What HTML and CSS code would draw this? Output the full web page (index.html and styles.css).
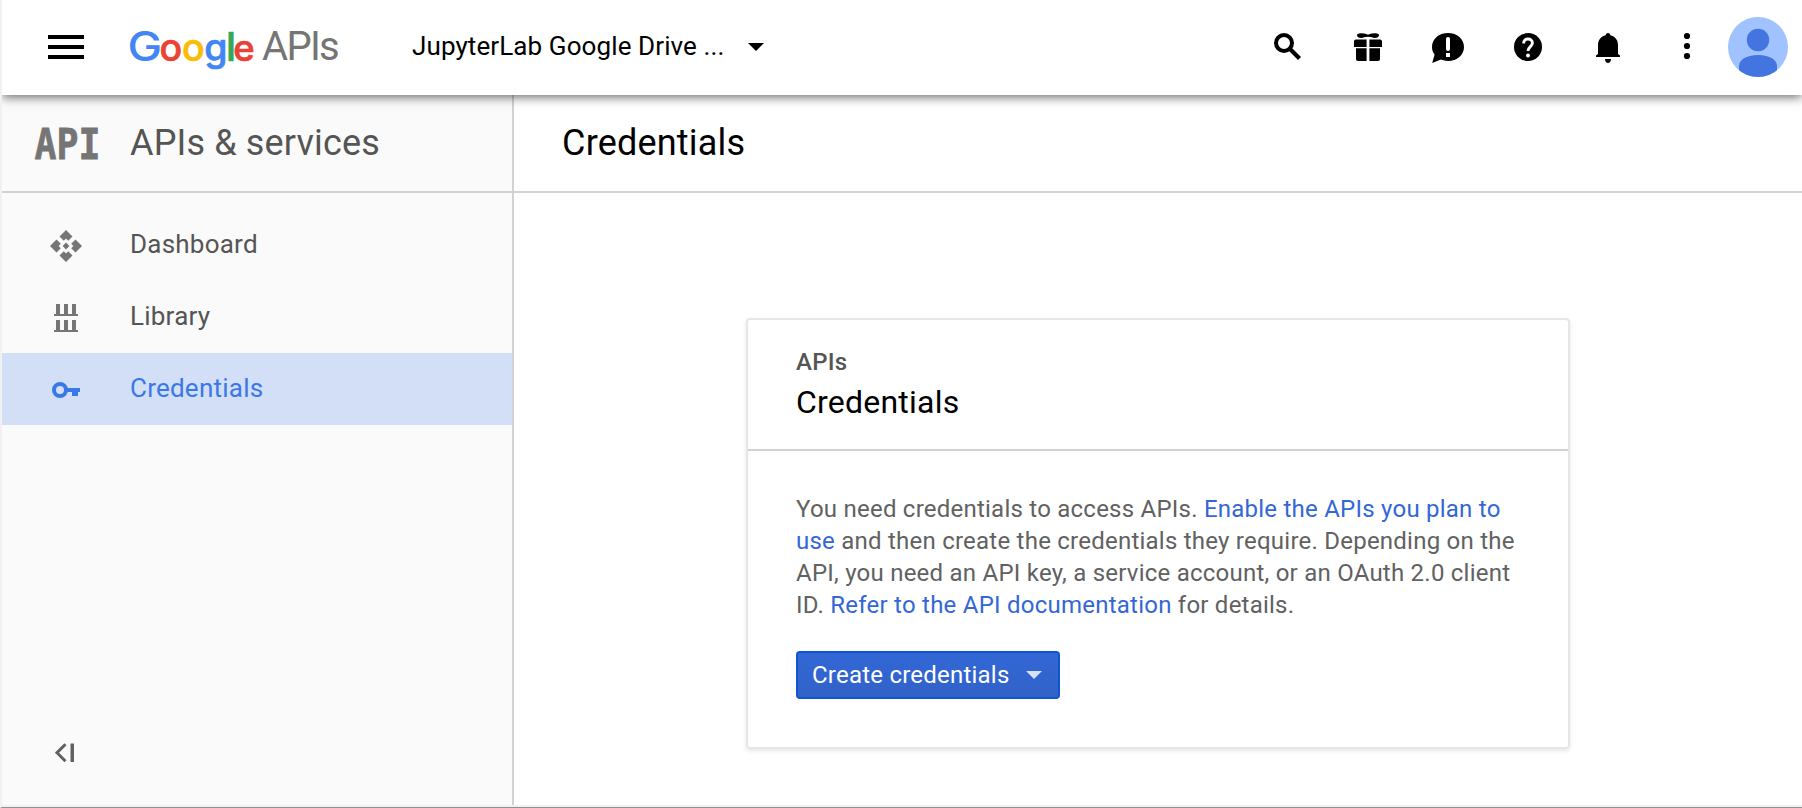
FILE: index.html
```html
<!DOCTYPE html>
<html lang="en">
<head>
<meta charset="utf-8">
<title>Credentials - Google APIs</title>
<link rel="stylesheet" href="styles.css">
</head>
<body>
<div class="app">
  <header class="topbar">
    <div class="menu"><span></span><span></span><span></span></div>
    <svg class="brand" width="224" height="72" viewBox="-4 -6 224 72">
      <g class="brand-google">
        <text class="blue" font-size="41" transform="translate(-2.500 43.500) scale(1.13 1)">G</text>
        <text class="red stroke-red" font-size="37.500" x="29.500" y="43.500">o</text>
        <text class="yellow stroke-yellow" font-size="37.500" x="52" y="43.500">o</text>
        <text class="blue stroke-blue" font-size="37.500" x="74.300" y="43.500">g</text>
        <text class="green stroke-green" font-size="39.500" x="96" y="43.500">l</text>
        <text class="red stroke-red" font-size="36.500" x="103.300" y="43.500">e</text>
      </g>
      <text class="brand-apis" x="132 156.500 180 189" y="43">APIs</text>
    </svg>
    <div class="project"><span>JupyterLab Google Drive ...</span>
      <svg width="16" height="8" viewBox="0 0 16 8"><path d="M0 0h16L8 8z"/></svg>
    </div>
    <nav class="tools">
      <svg viewBox="0 0 40 40"><circle cx="16" cy="16" r="8" fill="none" stroke="#000" stroke-width="4"/><path d="M21.500 21.500L31.500 31.500" stroke="#000" stroke-width="4.200"/></svg>
      <svg viewBox="0 0 40 40"><path d="M9 8c0-1.200 2-1.800 5-1.800 2.800 0 4.500.8 6 1.600 1.500-.8 3.200-1.600 6-1.600 3 0 5 .6 5 1.800 0 2-1.500 3-4 3-2.500 0-4-1.200-7-1.200s-4.500 1.200-7 1.200c-2.500 0-4-1-4-3zM8 12.500h10.600V20H6v-5.500c0-1.200.8-2 2-2zM21.400 12.500H32c1.200 0 2 .8 2 2V20H21.400zM8 21.200h10.600V34H10c-1.200 0-2-.8-2-2zM21.400 21.200H32V32c0 1.200-.8 2-2 2h-8.600z"/></svg>
      <svg viewBox="0 0 40 40"><path d="M20 6C11 6 4 12 4 20c0 3 1 5.500 2.600 7.600L4.200 36l8.600-3.400C15 33.500 17.500 34 20 34c9 0 16-6 16-14S29 6 20 6z"/><path d="M20 12v10" stroke="#fff" stroke-width="4" stroke-linecap="round"/><path d="M18 26h4v4h-4z" fill="#fff"/></svg>
      <svg viewBox="0 0 40 40"><circle cx="20" cy="20" r="14"/><path d="M15.600 16.500c0-2.900 2-4.500 4.400-4.500s4.400 1.600 4.400 4c0 3.600-4.400 3.600-4.400 8" fill="none" stroke="#fff" stroke-width="2.900"/><circle cx="20" cy="28.500" r="2" fill="#fff"/></svg>
      <svg viewBox="0 0 40 40"><path d="M20 6c-1.400 0-2.300 1-2.300 2.300C13 9.300 10 13.200 10 18v9l-2 1.500V30h24v-1.500L30 27v-9c0-4.800-3-8.700-7.700-9.700C22.300 7 21.400 6 20 6zM17 32h6c0 2.500-1.500 4-3 4s-3-1.500-3-4z"/></svg>
      <svg viewBox="0 0 40 40"><circle cx="19" cy="9" r="3.100"/><circle cx="19" cy="19" r="3.100"/><circle cx="19" cy="29" r="3.100"/></svg>
    </nav>
    <svg class="avatar" viewBox="0 0 60 60"><clipPath id="disc"><circle cx="30" cy="30" r="30"/></clipPath><g clip-path="url(#disc)"><path d="M0 0h60v60H0z" fill="#a0c2ff"/><circle cx="30" cy="23" r="11.200" fill="#4374e0"/><path d="M11 60V49c0-6 7-11 19-11s19 5 19 11v11z" fill="#4374e0"/></g></svg>
  </header>
  <div class="workspace">
    <aside class="sidebar">
      <div class="product">
        <svg width="72" height="58" viewBox="-4 -12 72 58"><text class="api-mark" transform="translate(-.5 32.500) scale(.83 .98)">API</text></svg>
        <h2>APIs &amp; services</h2>
      </div>
      <ul class="menu-list">
        <li><svg viewBox="0 0 36 36"><path d="M18 2l6.500 6.500-4.300 4.300L18 10.600l-2.200 2.200-4.300-4.300zM2 18l6.500-6.500 4.300 4.300-2.200 2.200 2.200 2.200-4.300 4.300zM34 18l-6.500-6.500-4.300 4.300 2.200 2.200-2.200 2.200 4.300 4.300zM18 34l-6.500-6.500 4.300-4.300 2.200 2.200 2.200-2.200 4.300 4.300zM18 14.600l3.400 3.400-3.400 3.400-3.400-3.400z"/></svg><span>Dashboard</span></li>
        <li><svg viewBox="0 0 36 36"><path d="M8 4h4v10h4V4h4v10h4V4h4v10h2v2H6v-2h2zM8 20h4v10h4V20h4v10h4V20h4v10h2v2H6v-2h2z"/></svg><span>Library</span></li>
        <li class="active"><svg viewBox="0 0 36 36"><circle cx="12" cy="18" r="6" fill="none" stroke="#3b78e7" stroke-width="4"/><path d="M19 16h13v4h-2v4h-6v-4h-5z"/></svg><span>Credentials</span></li>
      </ul>
      <svg class="collapse" width="22" height="20" viewBox="0 0 22 20"><path d="M10.500 1.200L2 9.700l8.500 8.500" fill="none" stroke="#616161" stroke-width="3"/><path d="M15.500 .5h3.500v18.500h-3.500z" fill="#616161"/></svg>
    </aside>
    <main class="content">
      <h1 class="page-title">Credentials</h1>
      <section class="card">
        <div class="card-head">
          <div class="eyebrow">APIs</div>
          <h3>Credentials</h3>
        </div>
        <div class="card-body">
          <p>You need credentials to access APIs. <a>Enable the APIs you plan to<br>use</a> and then create the credentials they require. Depending on the<br>API, you need an API key, a service account, or an OAuth 2.0 client<br>ID. <a>Refer to the API documentation</a> for details.</p>
          <button class="create">Create credentials<svg width="16" height="8" viewBox="0 0 16 8"><path d="M0 0h16L8 8z" fill="#d6e1f8"/></svg></button>
        </div>
      </section>
    </main>
  </div>
</div>
</body>
</html>
```
FILE: styles.css
```css
* { box-sizing: border-box; }
body { margin: 0; font-family: Roboto, sans-serif; background: #fff; color: #000; }
h1, h2, h3, p, ul { margin: 0; padding: 0; font-weight: 400; }
svg { display: block; flex: none; }
.app { height: 808px; display: flex; flex-direction: column; border-left: 2px solid #f1f1f1; border-bottom: 1px solid #909090; overflow: hidden; }

.topbar { position: relative; z-index: 1; height: 95px; flex: none; display: flex; align-items: center; padding: 0 14px 1px 46px; background: #fff; box-shadow: 0 2px 10px rgba(0,0,0,.6); }
.menu { width: 36px; display: grid; gap: 6px; }
.menu span { height: 4px; background: #000; }
.brand { margin-left: 42px; overflow: visible; }
.brand-google { font-family: Inter, sans-serif; font-weight: 500; }
.blue { fill: #4285f4; }
.red { fill: #ea4335; }
.yellow { fill: #fbbc05; }
.green { fill: #34a853; }
.stroke-blue { stroke: #4285f4; }
.stroke-red { stroke: #ea4335; }
.stroke-yellow { stroke: #fbbc05; }
.stroke-green { stroke: #34a853; }
.brand-google text { stroke-width: .7px; }
.brand-apis { font-size: 40px; fill: #757575; }
.project { display: flex; align-items: center; gap: 24px; margin-left: 62px; font-size: 26px; line-height: 32px; letter-spacing: .1px; padding-bottom: 2px; }
.project svg { margin-top: 2px; }
.tools { display: flex; margin-left: auto; }
.tools svg { width: 40px; height: 40px; margin: 0 20px; }
.avatar { width: 60px; height: 60px; }

.workspace { display: flex; flex: 1; min-height: 0; border-bottom: 2px solid #f1f1f1; }
.sidebar { width: 512px; flex: none; display: flex; flex-direction: column; background: #fafafa; border-right: 2px solid #d2d2d2; }
.product { height: 98px; flex: none; display: flex; align-items: center; gap: 27px; padding-left: 29px; border-bottom: 2px solid #d2d2d2; }
.product h2 { font-size: 36px; line-height: 48px; letter-spacing: .15px; color: #555; }
.api-mark { font: bold 44px "DejaVu Sans Mono", monospace; fill: #757575; stroke: #757575; stroke-width: .8px; }
.menu-list { list-style: none; padding-top: 16px; flex: 1; }
.menu-list li { height: 72px; display: flex; align-items: center; gap: 46px; padding-left: 46px; font-size: 26px; letter-spacing: .23px; color: #555; fill: #757575; }
.menu-list li svg { width: 36px; height: 36px; margin-top: 2px; }
.menu-list li span { padding-bottom: 2px; }
.menu-list .active { background: #d3dff7; color: #3b78e7; fill: #3b78e7; }
.collapse { margin: 0 0 42px 53px; }

.content { flex: 1; background: #fff; }
.page-title { height: 98px; padding-left: 48px; font-size: 36px; line-height: 96px; letter-spacing: .2px; border-bottom: 2px solid #d2d2d2; }
.card { width: 824px; height: 431px; margin: 125px 0 0 232px; border: 2px solid #e6e6e6; border-radius: 4px; box-shadow: 0 2px 4px rgba(0,0,0,.1); }
.card-head { height: 131px; padding: 26px 48px 0; border-bottom: 2px solid #d2d2d2; }
.eyebrow { font-size: 24px; font-weight: 500; line-height: 32px; letter-spacing: .25px; color: #555; }
.card-head h3 { font-size: 32px; line-height: 48px; letter-spacing: .22px; }
.card-body { padding: 42px 48px 0; }
.card-body p { font-size: 24px; line-height: 32px; color: #616161; white-space: nowrap; letter-spacing: .235px; }
.card-body a { color: #3367d6; }
.create { margin-top: 30px; width: 264px; height: 48px; display: flex; align-items: center; justify-content: space-between; padding: 0 16px 0 14px; font: 24px Roboto, sans-serif; letter-spacing: .22px; color: #fff; background: linear-gradient(#3367d6, #3062c8); border: 2px solid #0f55cc; border-radius: 4px; }
```
